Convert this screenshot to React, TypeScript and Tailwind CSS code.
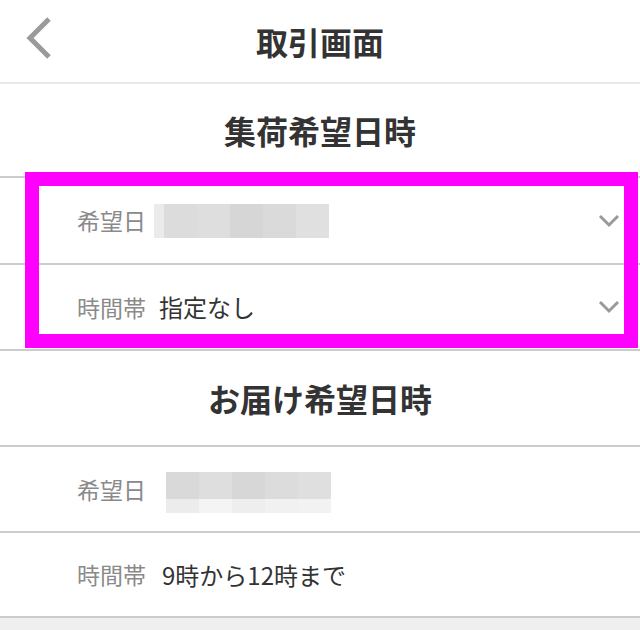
const BLUR_A = ['#ebebeb', '#dcdcdc', '#dedede', '#d6d6d6', '#dadada', '#e0e0e0'];

const Chevron = () => (
  <svg width="22" height="14" viewBox="0 0 22 14" className="shrink-0">
    <polyline points="2,2 11,11 20,2" fill="none" stroke="#9a9a9a" strokeWidth="3" />
  </svg>
);

const BlurA = () => (
  <div className="flex h-[34px]">
    {BLUR_A.map((c, i) => (
      <div key={i} className={i === 0 ? 'w-[10px]' : 'w-[33px]'} style={{ background: c }} />
    ))}
  </div>
);

const BlurB = () => {
  const top = ['#d9d9d9', '#dedede', '#d7d7d7', '#dcdcdc', '#dfdfdf'];
  const bottom = ['#ececec', '#f4f4f4', '#eeeeee', '#f1f1f1', '#f2f2f2'];
  return (
    <div className="flex flex-col">
      <div className="flex h-[27px]">
        {top.map((c, i) => (
          <div key={i} className="w-[33px]" style={{ background: c }} />
        ))}
      </div>
      <div className="flex h-[14px]">
        {bottom.map((c, i) => (
          <div key={i} className="w-[33px]" style={{ background: c }} />
        ))}
      </div>
    </div>
  );
};

const Row = ({
  label,
  children,
  chevron,
  h,
}: {
  label: string;
  children?: React.ReactNode;
  chevron?: boolean;
  h: string;
}) => (
  <div className={`flex items-center justify-between border-b-2 border-[#cccccc] pl-[77px] pr-[20px] ${h}`}>
    <div className="flex items-center">
      <span className="text-[23px] text-[#8a8a8a]">{label}</span>
      {children}
    </div>
    {chevron && <Chevron />}
  </div>
);

export default function App() {
  return (
    <div
      className="relative min-h-[630px] bg-[#efefef]"
      style={{ fontFamily: '"Noto Sans CJK JP", "Noto Sans", sans-serif' }}
    >
      <div className="bg-white">
        {/* header */}
        <div className="relative flex h-[84px] items-center justify-center border-b-2 border-[#e8e8e8]">
          <svg width="28" height="42" viewBox="0 0 28 42" className="absolute left-[25px] top-[17px]">
            <polyline points="24,2 5,21 24,40" fill="none" stroke="#9a9a9a" strokeWidth="5" />
          </svg>
          <span className="text-[32px] font-bold leading-none text-[#333333]">取引画面</span>
        </div>

        {/* 集荷 */}
        <div className="flex h-[94px] items-center justify-center border-b-2 border-[#cccccc]">
          <span className="text-[32px] font-bold leading-none text-[#333333]">集荷希望日時</span>
        </div>
        <Row label="希望日" chevron h="h-[87px]">
          <div className="ml-[8px]">
            <BlurA />
          </div>
        </Row>
        <Row label="時間帯" chevron h="h-[86px]">
          <span className="ml-[13px] text-[24px] text-[#333333]">指定なし</span>
        </Row>

        {/* お届け */}
        <div className="flex h-[96px] items-center justify-center border-b-2 border-[#cccccc]">
          <span className="text-[32px] font-bold leading-none text-[#333333]">お届け希望日時</span>
        </div>
        <Row label="希望日" h="h-[86px]">
          <div className="ml-[20px] mt-[6px]">
            <BlurB />
          </div>
        </Row>
        <Row label="時間帯" h="h-[85px]">
          <span className="ml-[16px] text-[24px] text-[#333333]">9時から12時まで</span>
        </Row>
      </div>

      {/* annotation frame */}
      <div className="absolute left-[25px] top-[172px] h-[176px] w-[613px] border-[14px] border-[#ff00ff]" />
    </div>
  );
}
